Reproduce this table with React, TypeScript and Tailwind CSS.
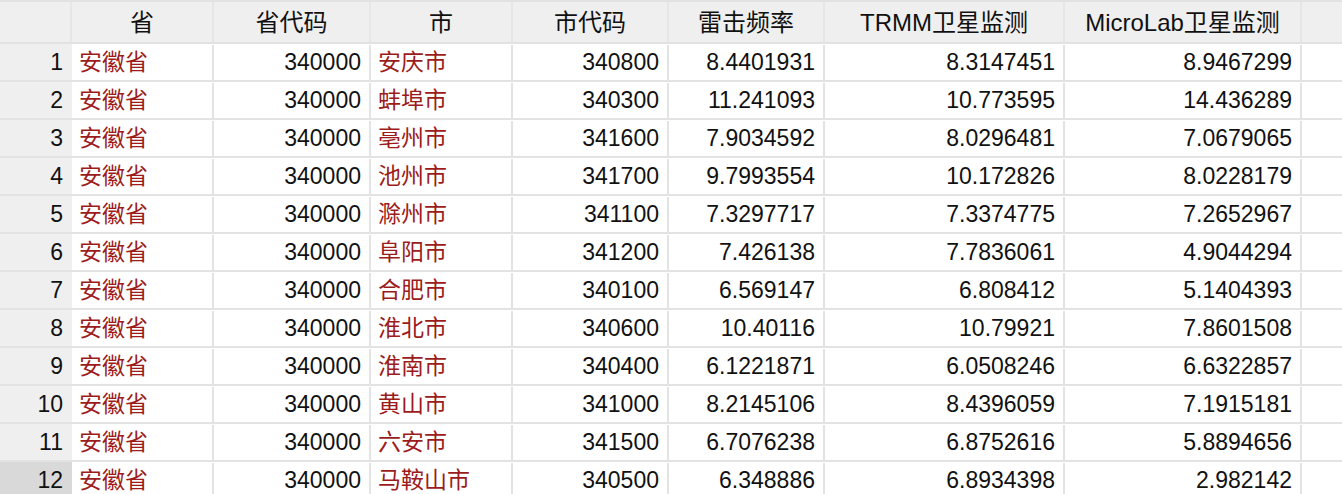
import React from 'react';

const rows: [string, string, string, string, string, string, string][] = [
  ['安徽省', '340000', '安庆市', '340800', '8.4401931', '8.3147451', '8.9467299'],
  ['安徽省', '340000', '蚌埠市', '340300', '11.241093', '10.773595', '14.436289'],
  ['安徽省', '340000', '亳州市', '341600', '7.9034592', '8.0296481', '7.0679065'],
  ['安徽省', '340000', '池州市', '341700', '9.7993554', '10.172826', '8.0228179'],
  ['安徽省', '340000', '滁州市', '341100', '7.3297717', '7.3374775', '7.2652967'],
  ['安徽省', '340000', '阜阳市', '341200', '7.426138', '7.7836061', '4.9044294'],
  ['安徽省', '340000', '合肥市', '340100', '6.569147', '6.808412', '5.1404393'],
  ['安徽省', '340000', '淮北市', '340600', '10.40116', '10.79921', '7.8601508'],
  ['安徽省', '340000', '淮南市', '340400', '6.1221871', '6.0508246', '6.6322857'],
  ['安徽省', '340000', '黄山市', '341000', '8.2145106', '8.4396059', '7.1915181'],
  ['安徽省', '340000', '六安市', '341500', '6.7076238', '6.8752616', '5.8894656'],
  ['安徽省', '340000', '马鞍山市', '340500', '6.348886', '6.8934398', '2.982142'],
];

const headers = ['省', '省代码', '市', '市代码', '雷击频率', 'TRMM卫星监测', 'MicroLab卫星监测'];

const cols = 'grid grid-cols-[72px_142px_157px_142px_156px_156px_240px_237px_1fr]';

const App: React.FC = () => {
  return (
    <div className="w-[1342px] h-[494px] overflow-hidden bg-white text-[23px] text-[#111] font-['Liberation_Sans','Noto_Sans_CJK_SC',sans-serif]">
      {/* Header */}
      <div className={`${cols} h-[44px] bg-[#efefef] border-t-2 border-b-2 border-[#e2e2e2] text-[24px]`}>
        <div className="border-r-2 border-[#e6e6e6]" />
        {headers.map((h) => (
          <div key={h} className="flex items-center justify-center border-r-2 border-[#e6e6e6] leading-none pt-[1px]">
            {h}
          </div>
        ))}
        <div />
      </div>

      {/* Body */}
      {rows.map((r, i) => {
        const selected = i === rows.length - 1;
        return (
          <div key={i} className={`${cols} h-[38px] border-b-2 border-[#e3e3e3] pt-[1px]`}>
            <div
              className={`flex items-center justify-end pr-[9px] -mt-[1px] pt-[1px] ${selected ? 'bg-[#d9d9d9]' : 'bg-[#efefef]'}`}
            >
              {i + 1}
            </div>
            <div className="flex items-center pl-[7px] border-r-2 border-[#e3e3e3] text-[#9c1b1b]">{r[0]}</div>
            <div className="flex items-center justify-end pr-[8px] border-r-2 border-[#e3e3e3]">{r[1]}</div>
            <div className="flex items-center pl-[7px] border-r-2 border-[#e3e3e3] text-[#9c1b1b]">{r[2]}</div>
            <div className="flex items-center justify-end pr-[8px] border-r-2 border-[#e3e3e3]">{r[3]}</div>
            <div className="flex items-center justify-end pr-[8px] border-r-2 border-[#e3e3e3]">{r[4]}</div>
            <div className="flex items-center justify-end pr-[8px] border-r-2 border-[#e3e3e3]">{r[5]}</div>
            <div className="flex items-center justify-end pr-[8px] border-r-2 border-[#e3e3e3]">{r[6]}</div>
            <div />
          </div>
        );
      })}
    </div>
  );
};

export default App;
